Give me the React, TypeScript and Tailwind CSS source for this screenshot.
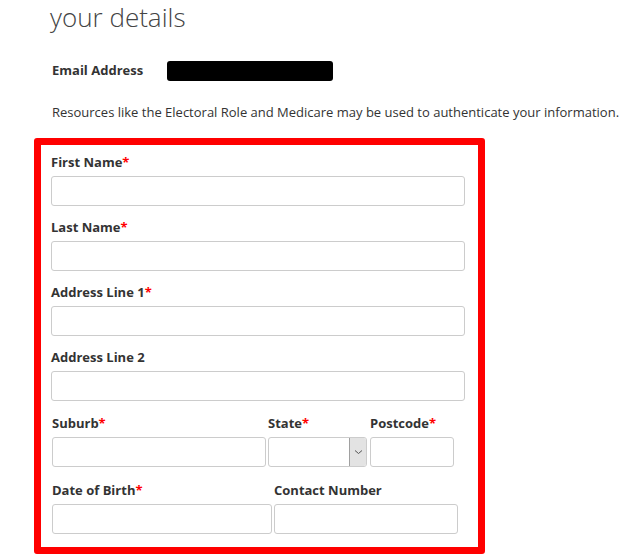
import React from "react";

const font = { fontFamily: '"Open Sans", "Noto Sans", "Liberation Sans", sans-serif' };

function Label({ text, req, className = "" }: { text: string; req?: boolean; className?: string }) {
  return (
    <div className={"h-[20px] leading-[20px] text-[13px] font-bold text-[#333] mb-[4px] whitespace-nowrap " + className}>
      {text}
      {req && <span className="text-[#ff0000]">*</span>}
    </div>
  );
}

function Input({ className = "" }: { className?: string }) {
  return <div className={"h-[30px] border border-[#cccccc] rounded-[3px] bg-white " + className} />;
}

export default function App() {
  return (
    <div className="w-[630px] h-[559px] bg-white overflow-hidden text-[#333]" style={font}>
      <div className="pl-[50px]">
        <h1 className="text-[26px] font-light leading-[34px] text-[#444]">your details</h1>
        <div className="flex items-center mt-[27px] h-[20px]">
          <span className="text-[13px] font-bold w-[117px] pl-[2px]">Email Address</span>
          <div className="w-[166px] h-[20px] bg-black rounded-[3px]" />
        </div>
        <p className="text-[13px] leading-[20px] mt-[21px] pl-[2px] whitespace-nowrap">
          Resources like the Electoral Role and Medicare may be used to authenticate your information.
        </p>
      </div>
      <div className="ml-[34px] mt-[16px] w-[451px] h-[416px] border-[7px] border-[#ff0000] rounded-[3px] pt-[7px] pl-[10px]">
        <div className="w-[414px]">
          <Label text="First Name" req />
          <Input />
          <Label text="Last Name" req className="mt-[11px]" />
          <Input />
          <Label text="Address Line 1" req className="mt-[11px]" />
          <Input />
          <Label text="Address Line 2" className="mt-[11px]" />
          <Input />
        </div>
        <div className="flex mt-[12px] pl-[1px]">
          <div className="w-[214px]">
            <Label text="Suburb" req />
            <Input />
          </div>
          <div className="w-[99px] ml-[2px]">
            <Label text="State" req />
            <div className="h-[30px] border border-[#cccccc] rounded-[3px] bg-white flex justify-end overflow-hidden">
              <div className="w-[17px] h-full bg-[#e3e3e3] border-l border-[#a0a0a0] flex items-center justify-center">
                <svg width="9" height="6" viewBox="0 0 9 6">
                  <path d="M1 1.5 L4.5 4.5 L8 1.5" fill="none" stroke="#555" strokeWidth="1" />
                </svg>
              </div>
            </div>
          </div>
          <div className="w-[84px] ml-[3px]">
            <Label text="Postcode" req />
            <Input />
          </div>
        </div>
        <div className="flex mt-[13px] pl-[1px]">
          <div className="w-[220px]">
            <Label text="Date of Birth" req />
            <Input />
          </div>
          <div className="w-[184px] ml-[2px]">
            <Label text="Contact Number" />
            <Input />
          </div>
        </div>
      </div>
    </div>
  );
}
